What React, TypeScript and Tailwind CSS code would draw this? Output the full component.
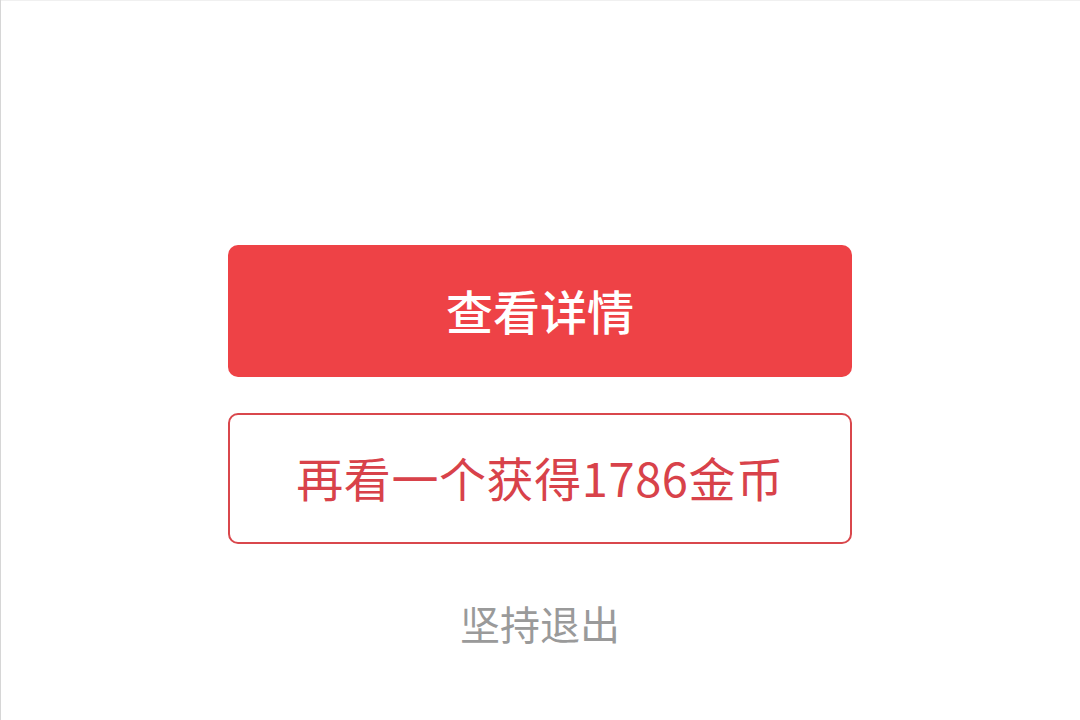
import React from "react";

export default function App() {
  return (
    <div
      className="w-[1080px] h-[720px] bg-white shadow-[inset_1px_0_0_#d6d6d6,inset_0_1px_0_#f0f0f0] flex flex-col items-center"
      style={{ fontFamily: '"Noto Sans CJK SC", "Noto Sans", sans-serif' }}
    >
      <button className="mt-[245px] w-[624px] h-[132px] rounded-[10px] bg-[#ee4246] text-white text-[47px] font-medium flex items-center justify-center leading-none pb-[4px]">
        查看详情
      </button>
      <button className="mt-[36px] w-[624px] h-[131px] rounded-[10px] border-2 border-[#d9474c] bg-white text-[#d8424a] text-[47px] tracking-[0.6px] flex items-center justify-center leading-none pb-[4px]">
        再看一个获得1786金币
      </button>
      <div className="mt-[51px] h-[56px] flex items-center text-[40px] text-[#9a9a9a] leading-none">
        坚持退出
      </div>
    </div>
  );
}
